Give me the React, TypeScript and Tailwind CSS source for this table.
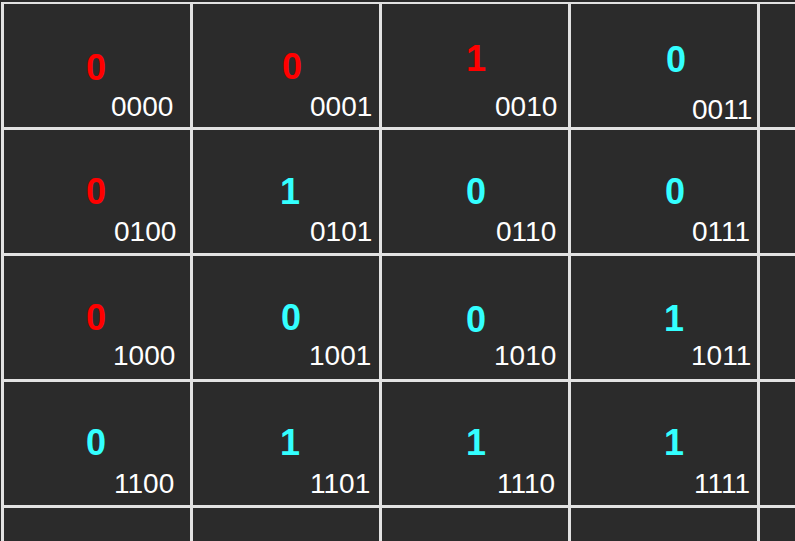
import React from "react";

type Cell = {
  v: string;
  red: boolean;
  label: string;
  d: string; // digit box classes (margins)
  l: string; // label box classes (margins)
};

const cells: Cell[] = [
  { v: "0", red: true, label: "0000", d: "ml-[82px] mt-[46px]", l: "ml-[107px] mt-[7px]" },
  { v: "0", red: true, label: "0001", d: "ml-[89px] mt-[45px]", l: "ml-[117px] mt-[8px]" },
  { v: "1", red: true, label: "0010", d: "ml-[84px] mt-[37px]", l: "ml-[113px] mt-[16px]" },
  { v: "0", red: false, label: "0011", d: "ml-[95px] mt-[38px]", l: "ml-[121px] mt-[18px]" },

  { v: "0", red: true, label: "0100", d: "ml-[82px] mt-[44px]", l: "ml-[110px] mt-[8px]" },
  { v: "1", red: false, label: "0101", d: "ml-[87px] mt-[44px]", l: "ml-[117px] mt-[8px]" },
  { v: "0", red: false, label: "0110", d: "ml-[84px] mt-[44px]", l: "ml-[114px] mt-[8px]" },
  { v: "0", red: false, label: "0111", d: "ml-[94px] mt-[44px]", l: "ml-[121px] mt-[8px]" },

  { v: "0", red: true, label: "1000", d: "ml-[82px] mt-[44px]", l: "ml-[109px] mt-[6px]" },
  { v: "0", red: false, label: "1001", d: "ml-[88px] mt-[44px]", l: "ml-[116px] mt-[6px]" },
  { v: "0", red: false, label: "1010", d: "ml-[84px] mt-[46px]", l: "ml-[112px] mt-[4px]" },
  { v: "1", red: false, label: "1011", d: "ml-[93px] mt-[45px]", l: "ml-[120px] mt-[5px]" },

  { v: "0", red: false, label: "1100", d: "ml-[82px] mt-[43px]", l: "ml-[110px] mt-[9px]" },
  { v: "1", red: false, label: "1101", d: "ml-[87px] mt-[43px]", l: "ml-[117px] mt-[9px]" },
  { v: "1", red: false, label: "1110", d: "ml-[84px] mt-[43px]", l: "ml-[115px] mt-[9px]" },
  { v: "1", red: false, label: "1111", d: "ml-[93px] mt-[43px]", l: "ml-[123px] mt-[9px]" },
];

function KCell({ c }: { c: Cell }) {
  return (
    <div className="bg-[#2b2b2b] overflow-hidden flex flex-col items-start">
      <div
        className={`${c.d} leading-none text-[36px] font-bold ${
          c.red ? "text-[#ff0000]" : "text-[#33ffff]"
        }`}
      >
        {c.v}
      </div>
      <div className={`${c.l} leading-none text-[28px] text-white`}>{c.label}</div>
    </div>
  );
}

export default function App() {
  const rows = [0, 1, 2, 3];
  return (
    <div
      className="w-screen h-screen overflow-hidden bg-[#2b2b2b]"
      style={{ fontFamily: '"Liberation Sans", Arial, sans-serif' }}
    >
      <div className="ml-[1px] mt-[2px] w-max grid grid-cols-[repeat(5,186px)] auto-rows-[123px] gap-[3px] px-[3px] pt-[2px] pb-[3px] bg-[#e2e2e2]">
        {rows.map((r) => (
          <React.Fragment key={r}>
            {cells.slice(r * 4, r * 4 + 4).map((c, i) => (
              <KCell key={i} c={c} />
            ))}
            <div className="bg-[#2b2b2b]" />
          </React.Fragment>
        ))}
        {[0, 1, 2, 3, 4].map((i) => (
          <div key={`e${i}`} className="bg-[#2b2b2b]" />
        ))}
      </div>
    </div>
  );
}
